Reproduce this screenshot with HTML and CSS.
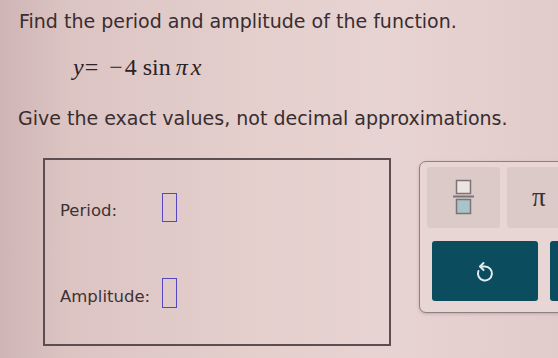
FILE: index.html
```html
<!DOCTYPE html>
<html>
<head>
<meta charset="utf-8">
<link rel="stylesheet" href="styles.css">
</head>
<body>
<div class="page">
  <p class="prompt first">Find the period and amplitude of the function.</p>
  <div class="equation"><span class="var">y</span><span class="eq">=</span><span class="minus">−</span><span class="num">4</span><span class="fn">sin</span><span class="pi">π</span><span class="var">x</span></div>
  <p class="prompt second">Give the exact values, not decimal approximations.</p>
  <div class="work">
    <div class="answers">
      <div class="row">
        <span class="label">Period:</span>
        <span class="slot"></span>
      </div>
      <div class="row tall">
        <span class="label">Amplitude:</span>
        <span class="slot"></span>
      </div>
    </div>
    <div class="keypad">
      <div class="keys top">
        <button class="key light" aria-label="fraction">
          <svg width="24" height="40" viewBox="0 0 24 40">
            <rect x="4.5" y="2.5" width="14" height="13" fill="#ede3e2" stroke="#7b7475" stroke-width="1.5"/>
            <rect x="1" y="17.5" width="21" height="2" fill="#7b7475"/>
            <rect x="4.5" y="21.5" width="14" height="14" fill="#a9c3ca" stroke="#7b7475" stroke-width="1.5"/>
          </svg>
        </button>
        <button class="key light pi-key">π</button>
      </div>
      <div class="keys bottom">
        <button class="key dark" aria-label="undo">
          <svg width="32" height="32" viewBox="0 0 32 32">
            <path d="M11.5 11.5 H16 A7 7 0 1 1 9.4 16" fill="none" stroke="#e3edf0" stroke-width="2" stroke-linecap="round"/>
            <path d="M14.5 8 L11 11.5 L14.5 15" fill="none" stroke="#e3edf0" stroke-width="2" stroke-linecap="round" stroke-linejoin="round"/>
          </svg>
        </button>
        <button class="key dark"></button>
      </div>
    </div>
  </div>
</div>
</body>
</html>
```

FILE: styles.css
```css
html, body {
  margin: 0;
  padding: 0;
  width: 558px;
  height: 358px;
  overflow: hidden;
}

body {
  background: linear-gradient(90deg, #cfb5b5 0%, #dcc4c3 12%, #e4cfcd 45%, #e7d3d1 70%, #e2cccb 100%);
  color: #382d30;
  font-family: "DejaVu Sans", Verdana, sans-serif;
}

.page {
  padding: 10px 0 0 19px;
}

.prompt {
  margin: 0;
  font-size: 19px;
  line-height: 22px;
  white-space: nowrap;
}

.second {
  margin-top: 26px;
  margin-left: -1px;
}

.equation {
  display: flex;
  align-items: baseline;
  margin: 21px 0 0 54px;
  font-family: "Liberation Serif", "Times New Roman", serif;
  font-size: 24px;
  line-height: 28px;
  color: #2b2325;
}

.var {
  font-style: italic;
}

.eq {
  margin: 0 11px 0 1px;
}

.num {
  margin: 0 6px 0 2px;
}

.fn {
  margin-right: 5px;
}

.pi {
  font-style: italic;
  margin-right: 3px;
}

.work {
  display: flex;
  align-items: flex-start;
  gap: 28px;
  margin: 29px 0 0 24px;
}

.answers {
  flex: none;
  width: 344px;
  height: 151px;
  border: 2px solid #5b4d50;
  padding-top: 33px;
  display: flex;
  flex-direction: column;
  gap: 56px;
}

.row {
  display: flex;
  align-items: center;
  height: 29px;
  padding-left: 15px;
}

.row.tall {
  height: 30px;
}

.label {
  width: 102px;
  margin-top: 6px;
  font-size: 16.5px;
  color: #3d3234;
}

.slot {
  box-sizing: border-box;
  width: 15px;
  height: 100%;
  border: 1.6px solid #5546c4;
}

.keypad {
  flex: none;
  margin-top: 3px;
  width: 200px;
  height: 152px;
  border: 1px solid #8c8081;
  border-radius: 7px;
  background: #e8d6d4;
  box-shadow: 0 1px 3px rgba(90, 60, 60, 0.25);
  padding: 5px 0 0 7px;
  box-sizing: border-box;
  display: flex;
  flex-direction: column;
  gap: 13px;
}

.keys {
  display: flex;
}

.top {
  gap: 7px;
}

.bottom {
  gap: 12px;
  margin-left: 5px;
}

.key {
  border: none;
  padding: 0;
  margin: 0;
  display: flex;
  align-items: center;
  justify-content: center;
  flex: none;
}

.light {
  width: 73px;
  height: 61px;
  background: #dccac9;
  border-radius: 3px;
}

.pi-key {
  font-family: "Liberation Serif", "Times New Roman", serif;
  font-size: 27px;
  color: #3a3234;
  justify-content: flex-start;
  padding-left: 25px;
  box-sizing: border-box;
}

.dark {
  width: 106px;
  height: 60px;
  background: #0b4c5f;
  border-radius: 3px;
}
```
